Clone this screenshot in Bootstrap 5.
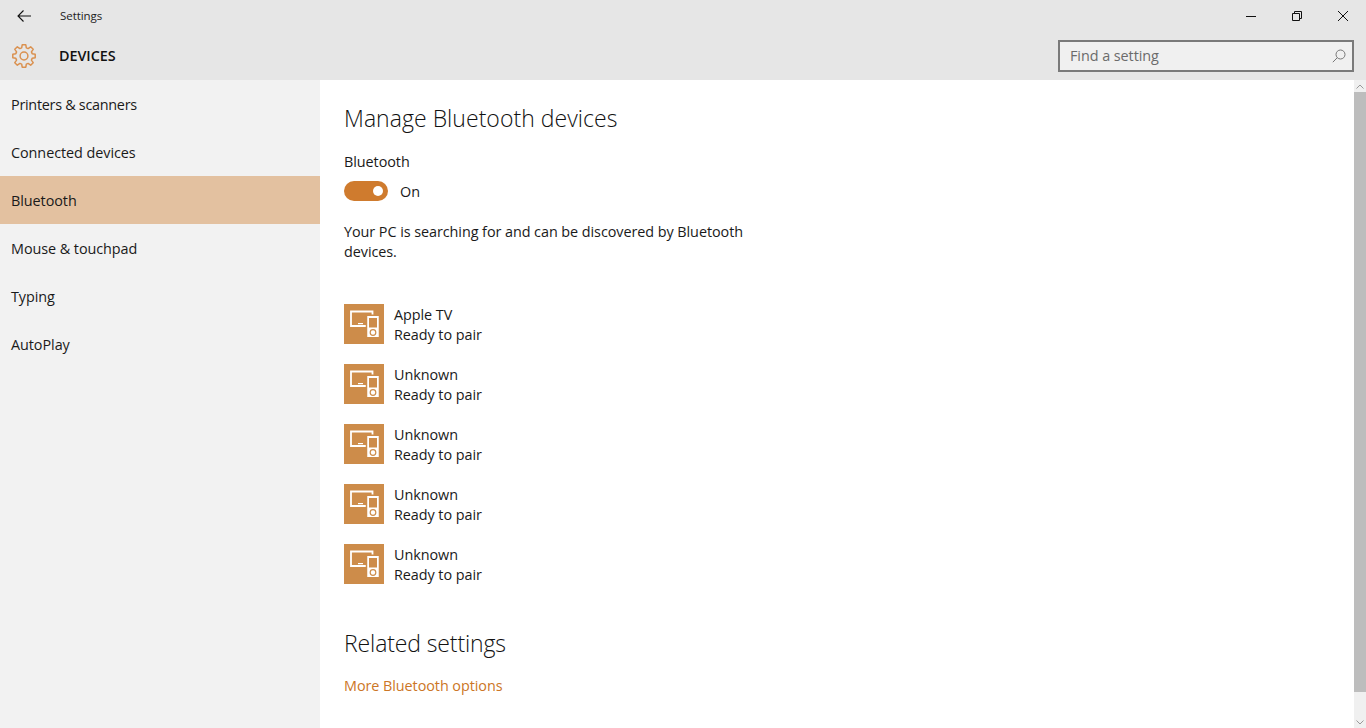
<!DOCTYPE html>
<html lang="en">
<head>
<meta charset="utf-8">
<title>Settings</title>
<link href="https://cdn.jsdelivr.net/npm/bootstrap@5.3.0/dist/css/bootstrap.min.css" rel="stylesheet">
<style>
html,body{height:100%;overflow:hidden}
body{font-family:"Open Sans","Noto Sans","Liberation Sans",sans-serif;font-size:14.4px;letter-spacing:-.06px;color:#1a1a1a;background:#fff;line-height:20px}
.shell{height:728px;width:1366px}
.topband{background:#e6e6e6;height:80px;flex:none}
.titlerow{height:32px}
.backbtn{width:48px}
.wintitle{font-size:11.5px;margin-left:12px;color:#222}
.winbtn{width:46px}
.headrow{height:48px;padding-right:12px}
.gearbox{width:48px}
.pagename{font-size:14.4px;font-weight:600;margin-left:11px;color:#111}
.findbox{width:296px;height:32px;border:2px solid #7a7a7a;background:#f0f0f0;padding:0 6px 0 10px;color:#6b6b6b}
.sidepane{width:320px;background:#f2f2f2;flex:none}
.sideitem{height:48px;padding:2px 0 0 11px;color:#1a1a1a}
.sideitem.picked{background:#e3c1a0}
.tightline{letter-spacing:-.28px}
.mainpane{padding:0 0 0 24px;min-width:0}
.h-manage{font-size:23px;font-weight:300;letter-spacing:.04px;line-height:30px;margin:23px 0 0;color:#111}
.h-label{margin-top:19px}
.swrow{margin-top:10px;height:20px}
.swtrack{width:44px;height:20px;margin-top:-2px;border-radius:10px;background:#cf7b2e;position:relative}
.swknob{position:absolute;right:5px;top:5px;width:10px;height:10px;border-radius:50%;background:#fff}
.swtext{margin-left:12px}
.notice{width:420px;margin:20px 0 0}
.devlist{margin-top:42px;gap:20px}
.devrow{height:40px}
.devicon{width:40px;height:40px;background:#cd8c4a;margin-right:10px;flex:none}
.devtext{padding-top:1px}
.h-related{font-size:23px;font-weight:300;letter-spacing:-.12px;line-height:30px;margin:44px 0 0;color:#111}
.morelink{display:block;margin-top:18px;color:#cc7626;text-decoration:none}
.sbar{width:12px;background:#f0f0f0;flex:none}
.sbarcap{height:12px}
.sbarthumb{height:600px;background:#bdbdbd}
</style>
</head>
<body>
<div class="shell d-flex flex-column">
  <div class="topband d-flex flex-column">
    <div class="titlerow d-flex align-items-center">
      <div class="backbtn d-flex justify-content-center">
        <svg width="14" height="12" viewBox="0 0 14 12" fill="none" stroke="#111" stroke-width="1.1"><path d="M14 6H1M6.500 .5 1 6l5.500 5.500"/></svg>
      </div>
      <span class="wintitle">Settings</span>
      <div class="ms-auto d-flex">
        <div class="winbtn d-flex justify-content-center align-items-center"><svg width="12" height="12" viewBox="0 0 12 12" fill="none" stroke="#111"><path d="M1 6.500h10"/></svg></div>
        <div class="winbtn d-flex justify-content-center align-items-center"><svg width="12" height="12" viewBox="0 0 12 12" fill="none" stroke="#111"><path d="M1.500 3.500h7v7h-7zM3.500 3.500v-2h7v7h-2"/></svg></div>
        <div class="winbtn d-flex justify-content-center align-items-center"><svg width="12" height="12" viewBox="0 0 12 12" fill="none" stroke="#111"><path d="M1 1l10 10M11 1 1 11"/></svg></div>
      </div>
    </div>
    <div class="headrow d-flex align-items-center">
      <div class="gearbox d-flex justify-content-center">
        <svg width="24" height="24" viewBox="0 0 24 24" fill="none" stroke="#da9150" stroke-width="1.500" stroke-linejoin="round">
          <circle cx="12" cy="12" r="3.900"/>
          <polygon transform="translate(12 12)" points="-2.34,-8.17 -1.8,-11.2 1.8,-11.2 2.34,-8.17 4.12,-7.43 6.66,-9.2 9.2,-6.66 7.43,-4.12 8.17,-2.34 11.2,-1.8 11.2,1.8 8.17,2.34 7.43,4.12 9.2,6.66 6.66,9.2 4.12,7.43 2.34,8.17 1.8,11.2 -1.8,11.2 -2.34,8.17 -4.12,7.43 -6.66,9.2 -9.2,6.66 -7.43,4.12 -8.17,2.34 -11.2,1.8 -11.2,-1.8 -8.17,-2.34 -7.43,-4.12 -9.2,-6.66 -6.66,-9.2 -4.12,-7.43"/>
        </svg>
      </div>
      <span class="pagename">DEVICES</span>
      <div class="findbox ms-auto d-flex align-items-center justify-content-between">
        <span>Find a setting</span>
        <svg width="14" height="14" viewBox="0 0 14 14" fill="none" stroke="#777"><circle cx="8.500" cy="5.500" r="4.500"/><path d="M5.300 8.700 .8 13.200"/></svg>
      </div>
    </div>
  </div>
  <div class="d-flex flex-grow-1" style="min-height:0">
    <nav class="sidepane d-flex flex-column">
      <div class="sideitem tightline d-flex align-items-center">Printers &amp; scanners</div>
      <div class="sideitem d-flex align-items-center">Connected devices</div>
      <div class="sideitem picked d-flex align-items-center">Bluetooth</div>
      <div class="sideitem d-flex align-items-center">Mouse &amp; touchpad</div>
      <div class="sideitem d-flex align-items-center">Typing</div>
      <div class="sideitem d-flex align-items-center">AutoPlay</div>
    </nav>
    <main class="mainpane flex-grow-1">
      <h1 class="h-manage">Manage Bluetooth devices</h1>
      <div class="h-label">Bluetooth</div>
      <div class="swrow d-flex align-items-center">
        <div class="swtrack"><span class="swknob"></span></div>
        <span class="swtext">On</span>
      </div>
      <p class="notice">Your PC is searching for and can be discovered by Bluetooth devices.</p>
      <div class="devlist d-flex flex-column">
        <div class="devrow d-flex"><div class="devicon"><svg width="40" height="40" viewBox="0 0 40 40"><use href="#devglyph"/></svg></div><div class="devtext">Apple TV<br>Ready to pair</div></div>
        <div class="devrow d-flex"><div class="devicon"><svg width="40" height="40" viewBox="0 0 40 40"><use href="#devglyph"/></svg></div><div class="devtext">Unknown<br>Ready to pair</div></div>
        <div class="devrow d-flex"><div class="devicon"><svg width="40" height="40" viewBox="0 0 40 40"><use href="#devglyph"/></svg></div><div class="devtext">Unknown<br>Ready to pair</div></div>
        <div class="devrow d-flex"><div class="devicon"><svg width="40" height="40" viewBox="0 0 40 40"><use href="#devglyph"/></svg></div><div class="devtext">Unknown<br>Ready to pair</div></div>
        <div class="devrow d-flex"><div class="devicon"><svg width="40" height="40" viewBox="0 0 40 40"><use href="#devglyph"/></svg></div><div class="devtext">Unknown<br>Ready to pair</div></div>
      </div>
      <h2 class="h-related">Related settings</h2>
      <a class="morelink" href="#">More Bluetooth options</a>
    </main>
    <div class="sbar d-flex flex-column">
      <div class="sbarcap d-flex justify-content-center align-items-center"><svg width="8" height="5" viewBox="0 0 8 5" fill="none" stroke="#999"><path d="M.5 4.500 4 1l3.500 3.500"/></svg></div>
      <div class="sbarthumb"></div>
      <div class="flex-grow-1"></div>
      <div class="sbarcap d-flex justify-content-center align-items-center"><svg width="8" height="5" viewBox="0 0 8 5" fill="none" stroke="#999"><path d="M.5.500 4 4 7.500.500"/></svg></div>
    </div>
  </div>
</div>
<svg width="0" height="0" class="d-block" aria-hidden="true">
  <defs>
    <g id="devglyph">
      <path fill="none" stroke="#fff" stroke-width="1.800" d="M7 7.500h21.500v14.500H7z"/>
      <path fill="#fff" d="M14 19h5v1.200h-5z"/>
      <path fill="#fff" stroke="#cd8c4a" stroke-width="1.500" d="M22.500 11.250h13v22.500h-13z"/>
      <path fill="#cd8c4a" d="M25 14h8v9.500h-8z"/>
      <circle cx="29" cy="28.500" r="2.800" fill="none" stroke="#cd8c4a" stroke-width="1.200"/>
    </g>
  </defs>
</svg>
<script src="https://cdn.jsdelivr.net/npm/bootstrap@5.3.0/dist/js/bootstrap.bundle.min.js"></script>
</body>
</html>
